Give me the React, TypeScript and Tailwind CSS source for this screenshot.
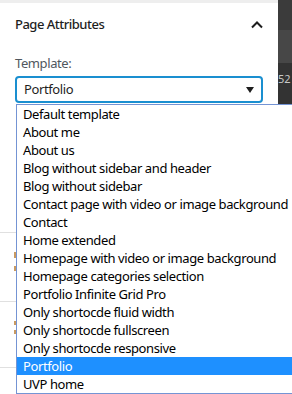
import React from "react";

const items = [
  "Default template",
  "About me",
  "About us",
  "Blog without sidebar and header",
  "Blog without sidebar",
  "Contact page with video or image background",
  "Contact",
  "Home extended",
  "Homepage with video or image background",
  "Homepage categories selection",
  "Portfolio Infinite Grid Pro",
  "Only shortocde fluid width",
  "Only shortocde fullscreen",
  "Only shortocde responsive",
  "Portfolio",
  "UVP home",
];

export default function App() {
  const font = { fontFamily: '"Noto Sans", "Open Sans", sans-serif' };
  return (
    <div className="relative w-[292px] h-[394px] overflow-hidden bg-white" style={font}>
      <div className="flex h-full">
        <div className="w-[278px] flex flex-col">
          <div className="h-[3px] bg-[#eeeeee]" />
          <div className="h-[44px] pl-[15px] pr-[15px] flex items-center justify-between">
            <span className="text-[13px] font-medium tracking-[-0.5px] text-[#1e1e1e]">Page Attributes</span>
            <svg width="12" height="8" viewBox="0 0 12 8">
              <polyline points="1,6.5 6,1.5 11,6.5" fill="none" stroke="#1e1e1e" strokeWidth="2" />
            </svg>
          </div>
          <div className="mt-[7px] pl-[15px] h-[18px] text-[13px] leading-[18px] tracking-[-0.4px] text-[#50575e]">Template:</div>
          <div className="mt-[4px] ml-[15px] w-[248px] h-[27px] rounded-[4px] border-2 border-[#1a8fd0] flex items-center justify-between pl-[7px] pr-[7px]">
            <span className="text-[13px] tracking-[-0.4px] text-[#1e1e1e]">Portfolio</span>
            <svg width="8" height="6" viewBox="0 0 8 6">
              <polygon points="0,0 8,0 4,6" fill="#1e1e1e" />
            </svg>
          </div>
          <div className="h-[130px] border-b border-[#e0e0e0]" />
          <div className="h-[69px] border-b border-[#e0e0e0] pl-[14px] pt-[19px] flex flex-col gap-[8px]">
            <span className="w-[2px] h-[6px] bg-[#c99a62]" />
            <span className="w-[2px] h-[5px] bg-[#c99a62]" />
          </div>
          <div className="h-[66px] border-b border-[#e0e0e0] pl-[14px] pt-[19px] flex flex-col gap-[5px]">
            <span className="w-[2px] h-[4px] bg-[#c99a62]" />
            <span className="w-[2px] h-[4px] bg-[#c99a62]" />
          </div>
          <div className="flex-1" />
        </div>
        <div className="w-[14px] flex flex-col">
          <div className="h-[30px] bg-[#3b3b3b]" />
          <div className="h-[33px] bg-[#474747]" />
          <div className="flex-1 bg-[#333333] pt-[9px] flex items-start gap-[2px]">
            <span className="text-[11px] leading-[14px] text-[#c8c8c8]">52</span>
            <span className="w-[2px] h-[12px] bg-[#2b8fe0]" />
          </div>
        </div>
      </div>

      <div className="absolute left-[16px] top-[104px] w-[290px] bg-white border border-[#7494d4]">
        {items.map((t, i) => (
          <div
            key={i}
            className={
              "h-[18px] pl-[6px] text-[13px] leading-[18px] tracking-[-0.4px] whitespace-nowrap " +
              (i === 14 ? "bg-[#1e90ff] text-white" : "text-black")
            }
          >
            {t}
          </div>
        ))}
      </div>
    </div>
  );
}
